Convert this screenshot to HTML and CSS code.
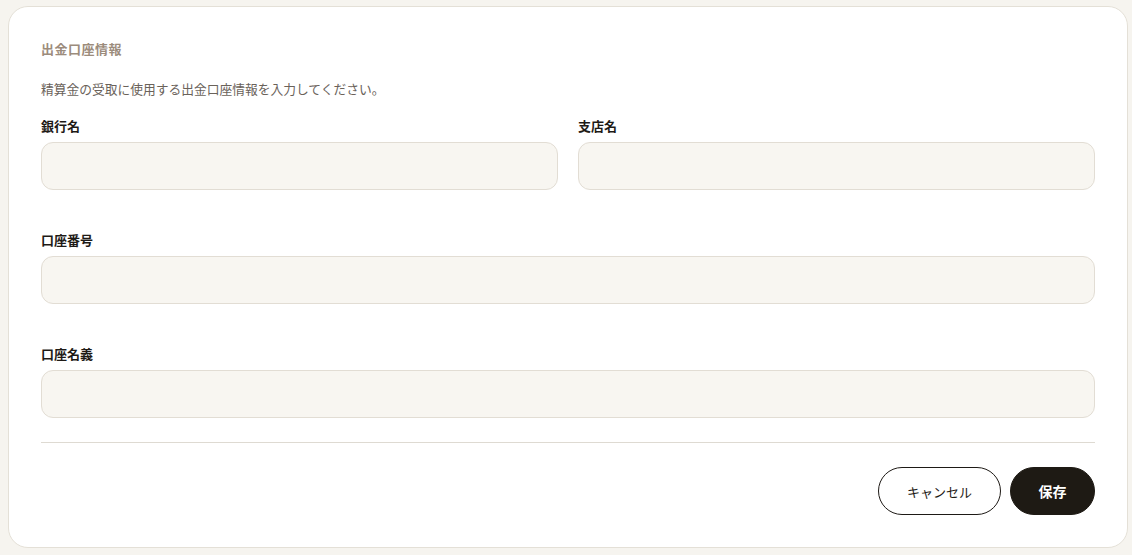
FILE: index.html
```html
<!DOCTYPE html>
<html lang="ja">
<head>
    <meta charset="UTF-8">
    <meta name="viewport" content="width=device-width, initial-scale=1.0">
    <title>出金口座情報</title>
    <link rel="stylesheet" href="styles.css">
</head>
<body>
    <div class="card">
        <h2 class="card-title">出金口座情報</h2>
        <p class="card-desc">精算金の受取に使用する出金口座情報を入力してください。</p>

        <form class="bank-form">
            <div class="row two">
                <div class="field">
                    <label for="bank_name">銀行名</label>
                    <input type="text" id="bank_name" name="bank_name">
                </div>
                <div class="field">
                    <label for="branch_name">支店名</label>
                    <input type="text" id="branch_name" name="branch_name">
                </div>
            </div>
            <div class="row">
                <div class="field">
                    <label for="account_number">口座番号</label>
                    <input type="text" id="account_number" name="account_number">
                </div>
            </div>
            <div class="row">
                <div class="field">
                    <label for="account_holder">口座名義</label>
                    <input type="text" id="account_holder" name="account_holder">
                </div>
            </div>

            <div class="actions">
                <button type="button" class="btn btn-outline">キャンセル</button>
                <button type="button" class="btn btn-dark">保存</button>
            </div>
        </form>
    </div>
</body>
</html>
```

FILE: styles.css
```css
* {
    box-sizing: border-box;
}

body {
    font-family: "Noto Sans CJK JP", "Noto Sans", sans-serif;
    background-color: #f6f4ef;
    color: #1e1a16;
    margin: 0;
    padding: 6px 4px 7px 8px;
}

.card {
    background-color: #fff;
    border: 1px solid #e4e0d7;
    border-radius: 20px;
    padding: 32px;
}

.card-title {
    margin: 0;
    font-size: 13px;
    font-weight: bold;
    color: #9c8c7c;
    line-height: 20px;
    letter-spacing: 0.04em;
}

.card-desc {
    margin: 20px 0 0;
    font-size: 12.75px;
    color: #6a625a;
    line-height: 20px;
}

.bank-form {
    margin-top: 18px;
}

.row + .row {
    margin-top: 41px;
}

.row.two {
    display: grid;
    grid-template-columns: 1fr 1fr;
    gap: 20px;
}

.field label {
    display: block;
    font-size: 13px;
    font-weight: bold;
    line-height: 18px;
    margin-bottom: 7px;
}

.field input {
    display: block;
    width: 100%;
    height: 48px;
    background-color: #f8f6f1;
    border: 1px solid #e2ddd4;
    border-radius: 12px;
    padding: 0 14px;
    font-size: 14px;
    font-family: inherit;
}

.actions {
    margin-top: 24px;
    border-top: 1px solid #dedad2;
    padding-top: 24px;
    display: flex;
    justify-content: flex-end;
    gap: 9px;
}

.btn {
    height: 48px;
    border-radius: 24px;
    font-family: inherit;
    cursor: pointer;
}

.btn-outline {
    width: 123px;
    background-color: #fff;
    border: 1px solid #1e1a16;
    color: #1e1a16;
    font-size: 13px;
}

.btn-dark {
    width: 85px;
    background-color: #1e1a14;
    border: 1px solid #1e1a14;
    color: #fff;
    font-size: 14px;
    font-weight: bold;
}
```
